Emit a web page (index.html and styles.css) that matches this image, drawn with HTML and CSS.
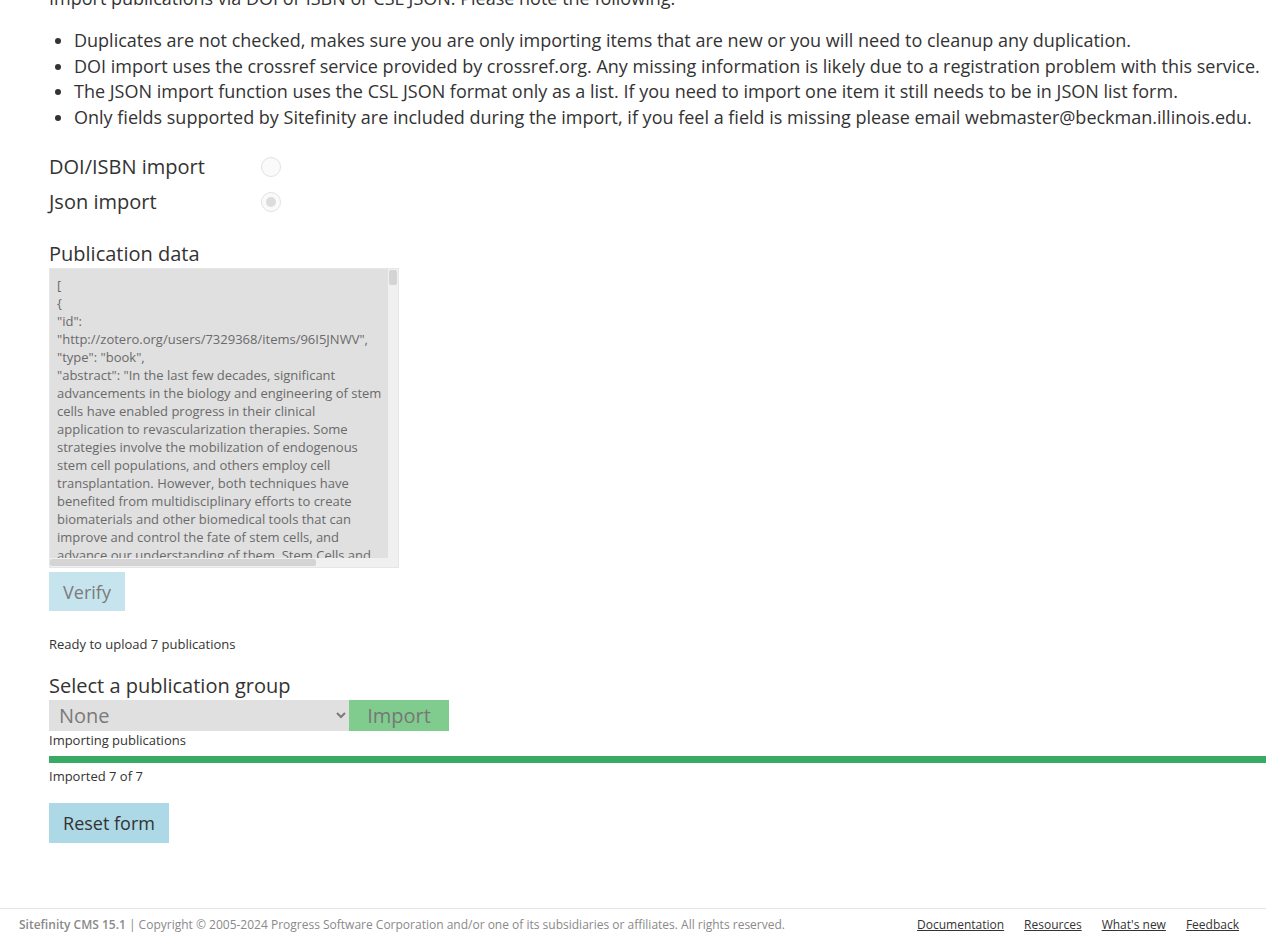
FILE: index.html
```html
<!DOCTYPE html>
<html lang="en">
  <head>
    <meta charset="UTF-8" />
    <meta name="viewport" content="width=device-width, initial-scale=1.0" />
    <title>Publication import</title>
    <link rel="stylesheet" href="styles.css">
  </head>
  <body>
    <div class="page">
      <p class="intro">Import publications via DOI or ISBN or CSL JSON. Please note the following:</p>
      <ul class="notes">
        <li>Duplicates are not checked, makes sure you are only importing items that are new or you will need to cleanup any duplication.</li>
        <li>DOI import uses the crossref service provided by crossref.org. Any missing information is likely due to a registration problem with this service.</li>
        <li>The JSON import function uses the CSL JSON format only as a list. If you need to import one item it still needs to be in JSON list form.</li>
        <li>Only fields supported by Sitefinity are included during the import, if you feel a field is missing please email webmaster@beckman.illinois.edu.</li>
      </ul>

      <div class="modes">
        <label class="mode">
          <span class="mode-name">DOI/ISBN import</span>
          <input type="radio" name="mode" value="doi" disabled />
        </label>
        <label class="mode">
          <span class="mode-name">Json import</span>
          <input type="radio" name="mode" value="json" checked disabled />
        </label>
      </div>

      <label class="field-label" for="data">Publication data</label>
      <!-- textarea with its own thin scrollbars -->
      <div class="data-box">
        <textarea id="data" class="data" readonly>[
{
"id": "http://zotero.org/users/7329368/items/96I5JNWV",
"type": "book",
"abstract": "In the last few decades, significant advancements in the biology and engineering of stem cells have enabled progress in their clinical application to revascularization therapies. Some strategies involve the mobilization of endogenous stem cell populations, and others employ cell transplantation. However, both techniques have benefited from multidisciplinary efforts to create biomaterials and other biomedical tools that can improve and control the fate of stem cells, and advance our understanding of them. Stem Cells and Revascularization Therapies covers the state of the art in this field.",
"ISBN": "978-1-4398-1867-4",
"publisher": "CRC Press",
"title": "Stem Cells and Revascularization Therapies",
"author": [
{
"family": "Bae",
"given": "Hojae"
}
],
"issued": {
"date-parts": [
[
"2011"
]
]
}
}
]</textarea>
        <div class="vscroll"><div class="vthumb"></div></div>
        <div class="hscroll"><div class="hthumb"></div></div>
        <div class="corner"></div>
      </div>
      <button type="button" class="btn btn-verify" disabled>Verify</button>

      <p class="status status-ready">Ready to upload 7 publications</p>

      <label class="field-label" for="group">Select a publication group</label>
      <div class="group-row">
        <select id="group" class="group-select" disabled>
          <option>None</option>
        </select>
        <button type="button" class="btn btn-import" disabled>Import</button>
      </div>
      <p class="status">Importing publications</p>
      <div class="progress"><div class="progress-fill" style="width: 100%"></div></div>
      <p class="status status-done">Imported 7 of 7</p>

      <button type="button" class="btn btn-reset">Reset form</button>
    </div>

    <footer class="footer">
      <div class="copyright"><strong>Sitefinity CMS 15.1</strong> | Copyright © 2005-2024 Progress Software Corporation and/or one of its subsidiaries or affiliates. All rights reserved.</div>
      <nav class="footer-links">
        <a href="#">Documentation</a>
        <a href="#">Resources</a>
        <a href="#">What's new</a>
        <a href="#">Feedback</a>
      </nav>
    </footer>
  </body>
</html>
```

FILE: styles.css
```css
body {
  margin: 0;
  font-family: "Open Sans", Arial, sans-serif;
  color: #333;
  background: #fff;
  overflow-x: hidden;
}
.page {
  padding-left: 49px;
}
.intro {
  margin: -14px 0 17px;
  font-size: 18px;
  line-height: 25.4px;
  white-space: nowrap;
}
.notes {
  margin: 0;
  padding-left: 25px;
  font-size: 18px;
  line-height: 25.4px;
}
.notes li {
  white-space: nowrap;
}
.modes {
  margin-top: 19px;
}
.mode {
  display: flex;
  align-items: center;
  height: 35px;
  font-size: 20px;
}
.mode-name {
  width: 212px;
}
.mode input {
  appearance: none;
  width: 20px;
  height: 20px;
  margin: 0;
  border: 1px solid #e2e2e2;
  border-radius: 50%;
  background: #fafafa;
  display: grid;
  place-items: center;
}
.mode input:checked::after {
  content: "";
  width: 10px;
  height: 10px;
  border-radius: 50%;
  background: #dcdcdc;
}
.field-label {
  display: block;
  font-size: 20px;
  line-height: 28px;
}
.modes + .field-label {
  margin-top: 21px;
}
.data-box {
  display: grid;
  grid-template-columns: 1fr 10px;
  grid-template-rows: 1fr 9px;
  box-sizing: border-box;
  width: 350px;
  height: 300px;
  border: 1px solid #e6e6e6;
  background: #e0e0e0;
}
.data {
  box-sizing: border-box;
  width: 100%;
  height: 100%;
  margin: 0;
  padding: 7px 4px 0 7px;
  border: none;
  background: transparent;
  color: #6a6a6a;
  font-family: "Open Sans", Arial, sans-serif;
  font-size: 13px;
  line-height: 18px;
  overflow: hidden;
  resize: none;
  outline: none;
}
.vscroll,
.hscroll,
.corner {
  background: #f0f0f0;
}
.vscroll {
  padding: 1px 1px 0;
}
.vthumb {
  height: 15px;
  background: #d4d4d4;
  border-radius: 2px;
}
.hscroll {
  padding: 1px 0 1px 0;
}
.hthumb {
  width: 266px;
  height: 100%;
  background: #d4d4d4;
  border-radius: 2px;
}
.btn {
  display: inline-block;
  border: none;
  border-radius: 0;
  font-family: "Open Sans", Arial, sans-serif;
  cursor: pointer;
}
.btn-verify {
  margin-top: 4px;
  width: 76px;
  height: 39px;
  padding: 0;
  background: #c6e4ee;
  color: #7b7b7b;
  font-size: 18px;
}
.status {
  margin: 0;
  font-size: 13px;
  line-height: 18px;
}
.status-ready {
  margin: 24px 0 19px;
}
.group-row {
  display: flex;
  height: 31px;
}
.group-select {
  width: 300px;
  height: 31px;
  padding: 0 4px 0 6px;
  border: none;
  border-radius: 0;
  background: #e0e0e0;
  color: #7a7a7a;
  font-family: "Open Sans", Arial, sans-serif;
  font-size: 20px;
  opacity: 1;
}
.btn-import {
  width: 100px;
  height: 31px;
  padding: 0;
  background: #80cc8e;
  color: #777;
  font-size: 20px;
}
.progress {
  margin-top: 7px;
  height: 7px;
  background: #e9e9e9;
}
.progress-fill {
  height: 100%;
  background: #38aa63;
}
.status-done {
  margin-top: 4px;
}
.btn-reset {
  margin-top: 18px;
  width: 120px;
  height: 40px;
  padding: 0;
  background: #add8e6;
  color: #333;
  font-size: 18px;
}
.footer {
  margin-top: 65px;
  border-top: 1px solid #e5e5e5;
  display: flex;
  justify-content: space-between;
  padding: 7px 27px 0 19px;
  font-size: 12px;
  line-height: 17px;
  color: #8a8a8a;
}
.copyright strong {
  font-weight: 600;
}
.footer-links {
  display: flex;
  gap: 20px;
}
.footer-links a {
  color: #333;
  text-decoration: underline;
}
```
